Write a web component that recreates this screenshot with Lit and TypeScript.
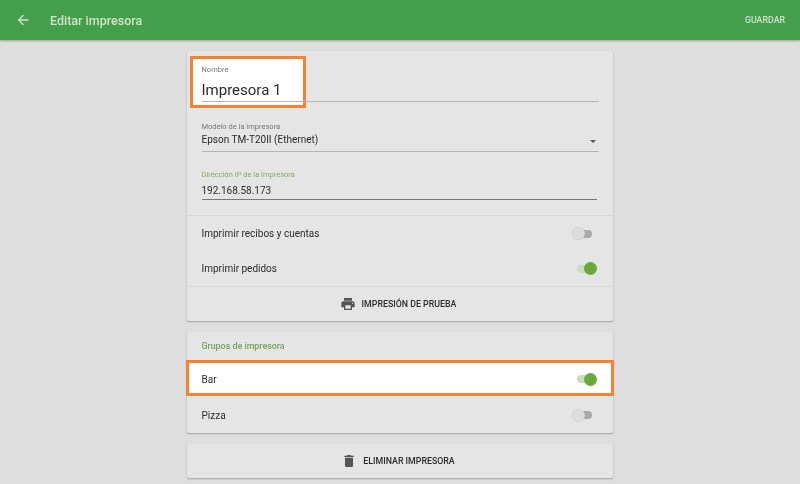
import { LitElement, html, css } from "lit";
import { customElement } from "lit/decorators.js";

@customElement("app-root")
export class AppRoot extends LitElement {
  static styles = css`
    :host { display: block; width: 800px; height: 484px; overflow: hidden; background: #dedede; font-family: Roboto, "Liberation Sans", sans-serif; color: #2b2b2b; }
    .page { height: 484px; filter: blur(0.35px); }
    .bar { height: 40px; background: #449f4a; box-shadow: 0 1px 2px rgba(0,0,0,.3); display: flex; align-items: center; color: #cfe3d0; padding: 0 15px 0 14.5px; }
    .bar svg { width: 16px; height: 16px; fill: #d5e8d6; margin-right: 19.5px; }
    .bar .title { font-size: 12.5px; font-weight: 500; flex: 1; }
    .bar .save { font-size: 8.8px; font-weight: 500; }
    .main { width: 426px; margin: 11px auto 0; display: flex; flex-direction: column; gap: 11px; }
    .card { position: relative; background: #e5e5e5; border-radius: 2px; box-shadow: 0 1px 2px rgba(0,0,0,.28); }
    .fields { padding: 0 14px 15px 14.5px; border-bottom: 1px solid #dadada; }
    .field { position: relative; border-bottom: 1px solid #b5b5b5; }
    .label { font-size: 7.5px; color: #777; line-height: 10px; position: relative; }
    .value { font-size: 10px; color: #2b2b2b; line-height: 14px; position: relative; }
    .name { padding-top: 14px; }
    .name .value { font-size: 15px; line-height: 22px; margin-top: 4px; }
    .model { margin-top: 20px; padding-bottom: 4px; }
    .model .value { margin-top: 1px; }
    .caret { position: absolute; right: 3px; bottom: 8px; width: 0; height: 0; border-left: 3px solid transparent; border-right: 3px solid transparent; border-top: 3px solid #555; }
    .ip { margin-top: 18px; margin-right: 2px; padding-bottom: 1px; border-bottom-color: #777; }
    .ip .label { color: #83ab60; }
    .ip .value { margin-top: 4px; }
    .row { position: relative; height: 35px; display: flex; align-items: center; justify-content: space-between; padding: 0 14px 0 14.5px; font-size: 10px; }
    .row.tall { height: 36px; }
    .row.ruled { box-sizing: content-box; border-bottom: 1px solid #dadada; }
    .row span { position: relative; }
    .toggle { position: relative; width: 15px; height: 8px; margin-right: 7px; border-radius: 4px; background: #a9a9a9; }
    .toggle::after { content: ""; position: absolute; top: -2.5px; left: -5px; width: 13px; height: 13px; border-radius: 50%; background: #dcdcdc; box-shadow: 0 0 1px rgba(0,0,0,.2); }
    .toggle.on { background: #c9dfbc; }
    .toggle.on::after { left: auto; right: -5px; background: #6aa83c; box-shadow: none; }
    .action { height: 34px; padding-right: 4px; display: flex; align-items: center; justify-content: center; gap: 6px; font-size: 8.8px; font-weight: 500; color: #2b2b2b; }
    .action svg { width: 16px; height: 16px; fill: #555; }
    .head { height: 29px; box-sizing: border-box; padding: 9px 14.5px 0; font-size: 8.9px; font-weight: 500; color: #78a35a; line-height: 11px; }
    .hl { position: absolute; box-sizing: border-box; border: 3px solid #f58233; background: #fff; }
    .hl.a { left: 3px; top: 5px; width: 116px; height: 52px; }
    .hl.b { left: -1px; right: -1px; top: 28px; height: 36px; }
  `;
  render() {
    return html`
      <div class="page">
      <div class="bar">
        <svg viewBox="0 0 24 24"><path d="M20 11H7.83l5.59-5.59L12 4l-8 8 8 8 1.41-1.41L7.83 13H20z"/></svg>
        <span class="title">Editar impresora</span><span class="save">GUARDAR</span>
      </div>
      <div class="main">
        <div class="card">
          <div class="hl a"></div>
          <div class="fields">
            <div class="field name"><div class="label">Nombre</div><div class="value">Impresora 1</div></div>
            <div class="field model"><div class="label">Modelo de la impresora</div><div class="value">Epson TM-T20II (Ethernet)</div><i class="caret"></i></div>
            <div class="field ip"><div class="label">Dirección IP de la impresora</div><div class="value">192.168.58.173</div></div>
          </div>
          <div class="row"><span>Imprimir recibos y cuentas</span><div class="toggle"></div></div>
          <div class="row ruled"><span>Imprimir pedidos</span><div class="toggle on"></div></div>
          <div class="action"><svg viewBox="0 0 24 24"><path d="M19 8H5c-1.66 0-3 1.34-3 3v6h4v4h12v-4h4v-6c0-1.66-1.34-3-3-3zm-3 11H8v-5h8v5zm3-7c-.55 0-1-.45-1-1s.45-1 1-1 1 .45 1 1-.45 1-1 1zm-1-9H6v4h12V3z"/></svg>IMPRESIÓN DE PRUEBA</div>
        </div>
        <div class="card">
          <div class="hl b"></div>
          <div class="head">Grupos de impresora</div>
          <div class="row tall"><span>Bar</span><div class="toggle on"></div></div>
          <div class="row tall"><span>Pizza</span><div class="toggle"></div></div>
        </div>
        <div class="card">
          <div class="action"><svg viewBox="0 0 24 24"><path d="M6 19c0 1.1.9 2 2 2h8c1.1 0 2-.9 2-2V7H6v12zM19 4h-3.5l-1-1h-5l-1 1H5v2h14V4z"/></svg>ELIMINAR IMPRESORA</div>
        </div>
      </div>
      </div>
    `;
  }
}
